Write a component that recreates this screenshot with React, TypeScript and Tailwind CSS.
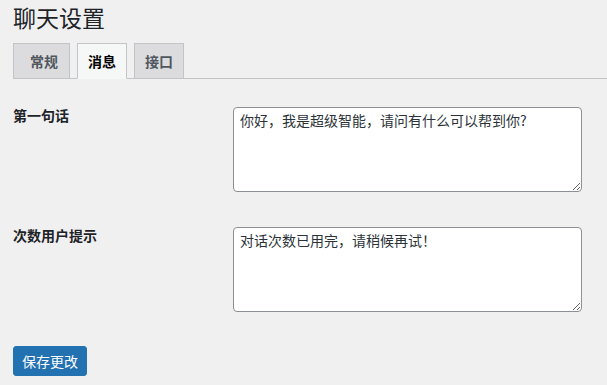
export default function App() {
  const tabs = [
    { name: "常规", active: false, cls: "pl-[16px] pr-[11px]" },
    { name: "消息", active: true, cls: "px-[10px]" },
    { name: "接口", active: false, cls: "px-[10px]" },
  ];

  return (
    <div className="w-full h-[385px] overflow-hidden bg-[#f0f0f1] pl-[13px] font-['Segoe_UI','Noto_Sans_CJK_SC',sans-serif] text-[#1d2327]">
      <h1 className="pt-[2px] text-[23px] leading-[30px] font-normal">聊天设置</h1>

      <div className="mt-[11px] flex items-end gap-[7px] border-b border-[#c3c4c7]">
        {tabs.map((t) => (
          <div
            key={t.name}
            className={
              t.active
                ? "-mb-px h-[36px] border border-[#c3c4c7] border-b-[#f6f7f7] bg-[#f6f7f7] px-[10px] text-[14px] leading-[34px] font-semibold text-black"
                : "-mb-px h-[36px] border border-[#c3c4c7] bg-[#dcdcde] text-[14px] leading-[34px] font-semibold text-[#50575e] " + t.cls
            }
          >
            {t.name}
          </div>
        ))}
      </div>

      <form className="mt-[28px]">
        <div className="flex">
          <label className="-mt-[2px] w-[220px] text-[14px] leading-[20px] font-semibold">第一句话</label>
          <textarea
            className="h-[85px] w-[349px] rounded-[4px] border border-[#8c8f94] bg-white px-[6px] py-[2px] text-[14px] leading-[20px] text-[#2c3338] outline-none"
            defaultValue="你好，我是超级智能，请问有什么可以帮到你?"
          />
        </div>
        <div className="mt-[35px] flex">
          <label className="-mt-[2px] w-[220px] text-[14px] leading-[20px] font-semibold">次数用户提示</label>
          <textarea
            className="h-[85px] w-[349px] rounded-[4px] border border-[#8c8f94] bg-white px-[6px] py-[2px] text-[14px] leading-[20px] text-[#2c3338] outline-none"
            defaultValue="对话次数已用完，请稍候再试！"
          />
        </div>
        <button
          type="button"
          className="mt-[34px] block h-[30px] rounded-[3px] border border-[#2271b1] bg-[#2271b1] px-[8px] text-[14px] leading-[28px] text-white"
        >
          保存更改
        </button>
      </form>
    </div>
  );
}
